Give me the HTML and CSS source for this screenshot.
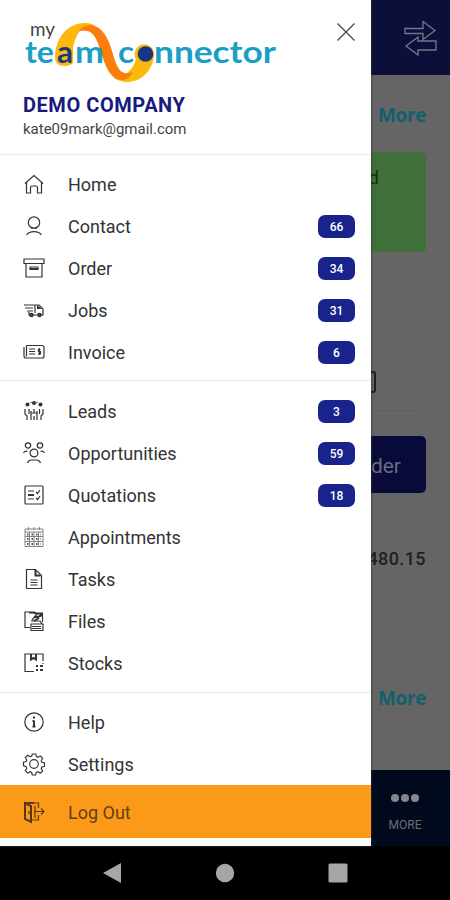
FILE: index.html
```html
<!DOCTYPE html>
<html lang="en">
<head>
    <meta charset="UTF-8">
    <meta name="viewport" content="width=device-width, initial-scale=1.0">
    <title>My Team Connector</title>
    <link rel="stylesheet" href="styles.css">
</head>
<body>
    <div class="phone">
        <!-- dashboard behind the drawer -->
        <div class="page">
            <div class="topbar">
                <svg class="swap" viewBox="0 0 34 36">
                    <path d="M1 8.500h18V1.500l12 9-12 9v-6H1zM32 21H14v-4L2 26l12 9v-5h18z"/>
                </svg>
            </div>
            <div class="content">
                <a class="more">More</a>
                <div class="card"><span>d</span></div>
                <div class="field"><span class="box"></span></div>
                <div class="order-btn">der</div>
                <div class="amount">480.15</div>
                <a class="more more-bottom">More</a>
            </div>
            <div class="tabbar">
                <div class="tab">
                    <div class="dots"><i></i><i></i><i></i></div>
                    <span>MORE</span>
                </div>
            </div>
        </div>

        <div class="drawer">
            <div class="header">
                <svg class="logo" viewBox="0 0 260 66">
                    <path class="yellow" d="M41 38C41 20 52 3 71 3c5 0 8 1 10 3L66 11C63 14 61 20 59 27v16c-5 5-18 4-18-5z"/>
                    <path class="yellow" d="M100 58c3 2 8 4 13 4 17 0 27-15 27-28a9.700 9.700 0 1 0-18 5c-2 6-4 10-8 13-4 4-8 6-14 6z"/>
                    <path class="orange" d="M65 11C68 6 76 4 81 6c20 8 16 45 30 47 3 .5 6 0 8-1-3 5-6 8-11 8-22 0-19-48-35-49-2-.5-5 0-8 0z"/>
                    <circle class="navy" cx="131.500" cy="34" r="7.800"/>
                    <text class="my" x="16" y="16" textLength="25" lengthAdjust="spacingAndGlyphs">my</text>
                    <text x="11" y="42.500" textLength="29" lengthAdjust="spacingAndGlyphs">te</text>
                    <text class="navy" x="43" y="42.500" textLength="16" lengthAdjust="spacingAndGlyphs">a</text>
                    <text x="61" y="42.500" textLength="29" lengthAdjust="spacingAndGlyphs">m</text>
                    <text x="104" y="42.500" textLength="16" lengthAdjust="spacingAndGlyphs">c</text>
                    <text x="140" y="42.500" textLength="122" lengthAdjust="spacingAndGlyphs">nnector</text>
                </svg>
                <svg class="close" viewBox="0 0 20 20"><path d="M1.500 1.500l17 17M18.500 1.500l-17 17"/></svg>
                <div class="company">DEMO COMPANY</div>
                <div class="email">kate09mark@gmail.com</div>
            </div>

            <div class="group">
                <div class="item">
                    <svg viewBox="0 0 22 22"><path d="M2 10.500l9-8 9 8M3.500 9.500V20h4v-5q0-2 2-2h3q2 0 2 2v5h4V9.500"/></svg>
                    <span>Home</span>
                </div>
                <div class="item">
                    <svg viewBox="0 0 22 22"><circle cx="11" cy="7.500" r="5.700"/><path d="M9 12.500v1.500M13 12.500v1.500M3.500 20c3-4.500 12-4.500 15 0"/></svg>
                    <span>Contact</span><b>66</b>
                </div>
                <div class="item">
                    <svg viewBox="0 0 22 22"><path d="M1 2h20v4.500H1zM3 6.500h16V20H3zM7 10v2.500h8V10z"/><path class="thick" d="M7 12h8"/></svg>
                    <span>Order</span><b>34</b>
                </div>
                <div class="item">
                    <svg viewBox="0 0 22 22"><path d="M1 6h11M2 9h8M4 12h6M12 6v8M12 6h4l4 4v6h-2M6 13v3h1M10 16h5"/><path class="fill" d="M14 6l5 4h-5z"/><circle class="thick" cx="8.500" cy="16" r="1.300"/><circle class="thick" cx="16.500" cy="16" r="1.300"/></svg>
                    <span>Jobs</span><b>31</b>
                </div>
                <div class="item">
                    <svg viewBox="0 0 22 22"><path d="M3.500 4.500h15q2.500 0 2.500 2v8.500q0 2-2 2H3q-2 0-2-2V6M3.500 4.500v11M6 8h6M6 10.500h6M6 13h6M17.500 8.500h-2v2h2v2.500h-2.500M16.300 7v7"/></svg>
                    <span>Invoice</span><b>6</b>
                </div>
            </div>

            <div class="group group-leads">
                <div class="item">
                    <svg viewBox="0 0 22 22"><g class="fill"><circle cx="4.500" cy="4.500" r="2"/><circle cx="11" cy="3" r="2"/><circle cx="17.500" cy="4.500" r="2"/><circle cx="8" cy="2.500" r=".7"/><circle cx="14" cy="2.500" r=".7"/></g><path d="M2 9v5l2 2v4M6 9v5M8 20v-9M11 9v4M14 20v-9M16.500 9v5M20 9v5l-2 2v4M11 16v4M8 13h6"/></svg>
                    <span>Leads</span><b>3</b>
                </div>
                <div class="item">
                    <svg viewBox="0 0 22 22"><circle cx="5" cy="3.500" r="2.700"/><circle cx="17" cy="3.500" r="2.700"/><circle cx="11" cy="11" r="3.900"/><path d="M.5 11q1.500-2.500 4-1.500M21.500 11q-1.500-2.500-4-1.500M4.500 21q1-3 4-3h5q3 0 4 3"/></svg>
                    <span>Opportunities</span><b>59</b>
                </div>
                <div class="item">
                    <svg viewBox="0 0 22 22"><rect x="2" y="2" width="18" height="18" rx="1"/><path d="M5 7h6M5 15h6M13 8l1.500 1.500L17 6M13 14l1.500 1.500L17 12"/><path class="thick" d="M5 11h6"/></svg>
                    <span>Quotations</span><b>18</b>
                </div>
                <div class="item">
                    <svg class="thin" viewBox="0 0 22 22"><path d="M2 3h18v17.500H2zM2 6h18M2 10.500h18M2 15.500h18M6.500 6v14M11 6v14M15.500 6v14M5.500 1v3M11 1v3M16.500 1v3"/><path class="dash" d="M4 8.500h14M4 13h14M4 18h14"/></svg>
                    <span>Appointments</span>
                </div>
                <div class="item">
                    <svg viewBox="0 0 22 22"><path d="M3.500 1.500h9l6 6v13h-15zM7.500 12h7M7.500 14.500h7M7.500 17h7"/><path class="thick" d="M12.500 2v5.500h5"/></svg>
                    <span>Tasks</span>
                </div>
                <div class="item">
                    <svg viewBox="0 0 22 22"><path d="M7 17.500H2V2h4M9 10l5-6M8 11h9l2 3M8 14h12v6.500H8zM9 16.500h9M9 18.500h9M19.500 12V4"/><path class="thick" d="M6 2.500h5l2 1h7M11 7h4l4-2M11 11l5-3"/></svg>
                    <span>Files</span>
                </div>
                <div class="item">
                    <svg viewBox="0 0 22 22"><path d="M11 19.500H2V2h18v7M20 11v1"/><path class="thick" d="M8 2v5.500l2.500-1.500L13 7.500V2M13 14h2M17 14h3M13 18h2M17 18h3"/></svg>
                    <span>Stocks</span>
                </div>
            </div>

            <div class="group group-last">
                <div class="item">
                    <svg viewBox="0 0 22 22"><circle cx="11" cy="11" r="9.200"/><path class="thick" d="M11 9.500v6M9.500 10H11M9.500 15.500h3M11 5.500v2"/></svg>
                    <span>Help</span>
                </div>
                <div class="item">
                    <svg viewBox="-.5 .5 23 22"><path d="M9.200 1h3.600l.7 2.800 1.600.7 2.500-1.500 2.500 2.500-1.500 2.400.7 1.700 2.700.7v3.500l-2.800.7-.7 1.600 1.500 2.500-2.500 2.500-2.400-1.500-1.700.7-.7 2.700H9.200l-.7-2.800-1.600-.7-2.500 1.500-2.500-2.500 1.500-2.400-.7-1.700L0 13.200V9.700L2.800 9l.7-1.600L2 4.900l2.500-2.500 2.400 1.500 1.700-.7z"/><circle cx="11" cy="11.500" r="4.500"/></svg>
                    <span>Settings</span>
                </div>
            </div>
            <div class="item logout">
                <svg viewBox="0 0 22 22"><path d="M8 2h7.500v5M15.500 14v5H9M11 10.500h10M18 7.500l3 3-3 3"/><path class="thick" d="M2 2l6 3v16l-6-3zM2 2h9"/><path d="M12 5v12M6 10v3"/></svg>
                <span>Log Out</span>
            </div>
        </div>
    </div>

    <div class="navbar">
        <svg viewBox="0 0 20 20"><path d="M19 0v20L1 10z"/></svg>
        <svg viewBox="0 0 20 20"><circle cx="10" cy="10" r="9.200"/></svg>
        <svg viewBox="0 0 20 20"><rect x=".5" y=".5" width="19" height="19" rx="1.500"/></svg>
    </div>
</body>
</html>
```
FILE: styles.css
```css
* {
    box-sizing: border-box;
}
body {
    margin: 0;
    width: 450px;
    height: 900px;
    overflow: hidden;
    background-color: #000;
    font-family: Roboto, sans-serif;
}
.phone {
    position: relative;
    height: 846px;
}
.page {
    display: flex;
    flex-direction: column;
    height: 100%;
    background-color: #656565;
}
.topbar {
    display: flex;
    align-items: center;
    justify-content: flex-end;
    height: 75px;
    padding-right: 12px;
    background-color: #0c0f39;
}
.swap {
    width: 34px;
    height: 36px;
    fill: none;
    stroke: #74768c;
    stroke-width: 1.3;
}
.content {
    flex: 1;
    display: flex;
    flex-direction: column;
    align-items: flex-end;
    padding: 28px 24px 0;
}
.more {
    font-family: "Open Sans", sans-serif;
    font-size: 19px;
    font-weight: 700;
    letter-spacing: -0.4px;
    line-height: 24px;
    color: #145f6d;
}
.card {
    width: 390px;
    height: 100px;
    margin-top: 25px;
    padding: 13px 47px;
    border-radius: 5px;
    background-color: #40703a;
    font-size: 19px;
    line-height: 25px;
    text-align: right;
    color: #1c2c1a;
}
.field {
    width: 384px;
    height: 58px;
    margin: 101px 4px 25px 0;
    border-bottom: 1px solid #5e5e5e;
    padding: 18px 46px 0 0;
}
.box {
    display: block;
    width: 100px;
    height: 22px;
    margin-left: auto;
    border: 2px solid #202020;
    border-radius: 3px;
}
.order-btn {
    width: 390px;
    height: 57px;
    padding-right: 25px;
    border-radius: 5px;
    background-color: #080a3a;
    font-size: 21px;
    line-height: 60px;
    text-align: right;
    color: #6b6c80;
}
.amount {
    margin-top: 54px;
    font-size: 18px;
    font-weight: 500;
    letter-spacing: 0.4px;
    line-height: 24px;
    color: #202020;
}
.more-bottom {
    margin-top: 115px;
}
.tabbar {
    display: flex;
    justify-content: flex-end;
    height: 76px;
    background-color: #000a1c;
}
.tab {
    display: flex;
    flex-direction: column;
    align-items: center;
    width: 90px;
    padding-top: 24px;
    font-size: 12px;
    line-height: 14px;
    color: #6a6d75;
}
.dots {
    display: flex;
    gap: 2px;
    margin-bottom: 16px;
}
.dots i {
    width: 8px;
    height: 8px;
    border-radius: 50%;
    background-color: #85878c;
}
.drawer {
    position: absolute;
    top: 0;
    left: 0;
    width: 371px;
    height: 846px;
    background-color: #fff;
    box-shadow: 0 0 3px #333;
}
.header {
    position: relative;
    height: 155px;
    padding: 20px 0 0 23px;
    border-bottom: 1px solid #ececec;
}
.logo {
    display: block;
    width: 260px;
    height: 66px;
    margin-left: -9px;
    overflow: visible;
    font-family: Lato, sans-serif;
    font-size: 31px;
    font-weight: 700;
    fill: #1b9fc4;
}
.logo .my {
    font-size: 19px;
    font-weight: 400;
    fill: #444;
}
.logo .yellow {
    fill: #fdb90b;
}
.logo .orange {
    fill: #fb7d0b;
}
.logo .navy {
    fill: #173785;
}
.close {
    position: absolute;
    top: 22px;
    left: 336px;
    width: 20px;
    height: 20px;
    stroke: #444;
    stroke-width: 1.2;
}
.company {
    margin-top: 6px;
    font-size: 20px;
    font-weight: 700;
    letter-spacing: 0.55px;
    line-height: 26px;
    color: #181a80;
}
.email {
    font-size: 15px;
    line-height: 23px;
    color: #444;
}
.group {
    padding: 8px 0 7px;
    border-bottom: 1px solid #ececec;
}
.group-leads {
    padding: 9px 0 8px;
}
.group-last {
    padding-bottom: 0;
    border: none;
}
.item {
    display: flex;
    align-items: center;
    height: 42px;
    padding: 0 16px 0 23px;
    font-size: 18px;
    color: #333;
}
.item svg {
    width: 22px;
    height: 22px;
    margin-right: 23px;
    overflow: visible;
    fill: none;
    stroke: #333;
    stroke-width: 1.2;
}
.item svg .thick {
    stroke-width: 2;
}
.item svg .fill {
    fill: #333;
    stroke: none;
}
.item svg.thin {
    stroke: #777;
    stroke-width: 0.9;
}
.item svg .dash {
    stroke: #555;
    stroke-width: 1.8;
    stroke-dasharray: 1.5 3;
}
.item b {
    width: 37px;
    height: 23px;
    margin-left: auto;
    border-radius: 7px;
    background-color: #19238c;
    font-size: 12px;
    font-weight: 500;
    line-height: 24px;
    text-align: center;
    color: #fff;
}
.logout {
    height: 53px;
    background-color: #fb9a18;
    color: #634018;
}
.logout span {
    padding-top: 1px;
}
.logout svg {
    stroke: #573815;
}
.navbar {
    display: flex;
    align-items: center;
    gap: 93px;
    height: 54px;
    padding-left: 102px;
}
.navbar svg {
    width: 20px;
    height: 20px;
    fill: #a6a6a6;
}
```
